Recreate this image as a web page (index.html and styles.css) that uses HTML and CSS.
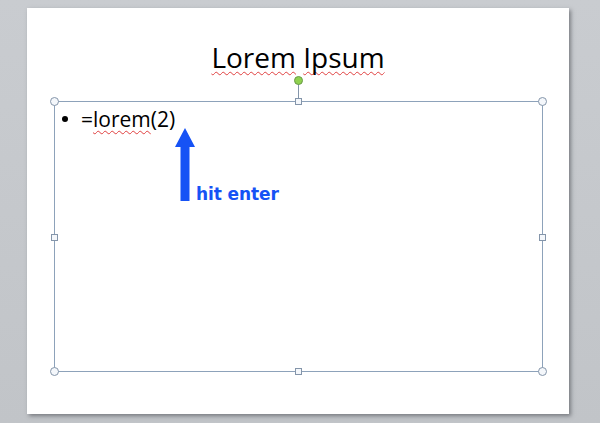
FILE: index.html
```html
<!DOCTYPE html>
<html>
<head>
<meta charset="utf-8">
<link rel="stylesheet" href="styles.css">
</head>
<body>
<div class="stage">
  <div class="slide">
    <div class="title"><span class="sq">Lorem</span> <span class="sq">Ipsum</span></div>
    <div class="textbox">
      <div class="rot-line"></div>
      <div class="h circ tl"></div>
      <div class="h circ tr"></div>
      <div class="h circ bl"></div>
      <div class="h circ br"></div>
      <div class="h sqh tm"></div>
      <div class="h sqh bm"></div>
      <div class="h sqh ml"></div>
      <div class="h sqh mr"></div>
      <div class="h rot"></div>
      <div class="item"><span class="dot"></span><span class="body">=<span class="sq">lorem</span>(2)</span></div>
      <div class="note">
        <svg class="arrow" width="20" height="73" viewBox="0 0 20 73">
          <polygon points="10,0 20,19 14.5,19 14.5,73 5.5,73 5.5,19 0,19" fill="#1652f5"/>
        </svg>
        <span class="hit">hit enter</span>
      </div>
    </div>
  </div>
</div>
</body>
</html>
```
FILE: styles.css
```css
html, body {
  margin: 0;
  padding: 0;
}
body {
  width: 600px;
  height: 423px;
  overflow: hidden;
  background: linear-gradient(#c9ccd0, #c1c4c8);
}
.stage {
  padding: 8px 0 0 27px;
}
.slide {
  width: 542px;
  height: 406px;
  background: #fff;
  box-shadow: 2px 2px 4px rgba(60, 64, 70, 0.55);
  display: flex;
  flex-direction: column;
}
.title {
  margin-top: 30px;
  font-family: "Open Sans", sans-serif;
  font-size: 28px;
  line-height: 38px;
  text-align: center;
  color: #000;
}
.sq {
  text-decoration: underline wavy #e04040;
  text-decoration-thickness: 1px;
  text-underline-offset: 3px;
  text-decoration-skip-ink: none;
}
.textbox {
  position: relative;
  margin: 25px 0 0 27px;
  width: 489px;
  height: 271px;
  border: 1px solid #8da2ba;
  padding: 2px 0 0 0;
  box-sizing: border-box;
}
.h {
  position: absolute;
  box-sizing: border-box;
  background: #f4f7fb;
  border: 1px solid #8495aa;
}
.circ {
  width: 9px;
  height: 9px;
  border-radius: 50%;
}
.tl { left: -5px; top: -5px; }
.tr { right: -5px; top: -5px; }
.bl { left: -5px; bottom: -5px; }
.br { right: -5px; bottom: -5px; }
.sqh {
  width: 7px;
  height: 7px;
}
.tm { left: 240px; top: -4px; }
.bm { left: 240px; bottom: -4px; }
.ml { left: -4px; top: 132px; }
.mr { right: -4px; top: 132px; }
.rot {
  width: 9px;
  height: 9px;
  border-radius: 50%;
  background: #8fd14f;
  border-color: #6a9a48;
  left: 239px;
  top: -26px;
}
.rot-line {
  position: absolute;
  left: 243px;
  top: -18px;
  width: 1px;
  height: 15px;
  background: #8495aa;
}
.item {
  display: flex;
  align-items: center;
  font-family: "Open Sans", sans-serif;
  font-size: 21px;
  line-height: 30px;
  color: #000;
}
.dot {
  width: 6px;
  height: 6px;
  border-radius: 50%;
  background: #000;
  margin: 0 13px 0 7px;
}
.note {
  position: absolute;
  left: 120px;
  top: 26px;
  display: flex;
  align-items: flex-end;
  gap: 1px;
}
.arrow {
  display: block;
}
.hit {
  font-family: "DejaVu Sans", sans-serif;
  font-weight: bold;
  font-size: 17px;
  line-height: 17px;
  color: #1652f5;
  letter-spacing: -0.1px;
  margin-bottom: -2px;
}
```
